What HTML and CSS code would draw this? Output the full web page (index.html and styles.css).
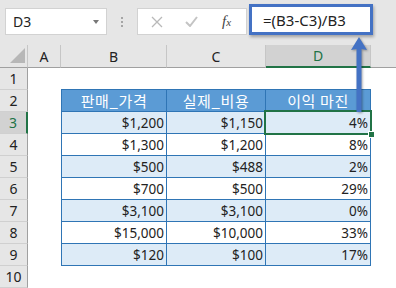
FILE: index.html
```html
<!doctype html>
<html>
<head>
<meta charset="UTF-8">
<title>Sheet</title>
<link rel="stylesheet" href="styles.css">
</head>
<body>
<div class="app">
  <div class="bar">
    <div class="namebox"><span>D3</span><span class="caret"></span></div>
    <div class="grip"><i></i><i></i><i></i></div>
    <div class="fxbox">
      <svg class="ico-x" width="12" height="12" viewBox="0 0 12 12"><path d="M1 1L11 11M11 1L1 11" stroke="#b9b9b9" stroke-width="1.3" fill="none"/></svg>
      <svg class="ico-ok" width="13" height="11" viewBox="0 0 13 11"><path d="M1 6L5 10L12 1" stroke="#c4c4c4" stroke-width="2" fill="none"/></svg>
      <span class="fx">f<small>x</small></span>
    </div>
    <div class="formula">=(B3-C3)/B3</div>
  </div>

  <div class="sheet">
    <div class="colhead corner"><svg width="17" height="17" viewBox="0 0 17 17"><polygon points="16,1 16,16 1,16" fill="#b7b7b7"/></svg></div>
    <div class="colhead">A</div>
    <div class="colhead">B</div>
    <div class="colhead">C</div>
    <div class="colhead active">D</div>
    <div class="colhead last"></div>

    <div class="rowhead">1</div><div></div><div class="edge"></div><div class="edge"></div><div class="edge"></div><div></div>

    <div class="rowhead">2</div><div></div>
    <div class="th first">판매_가격</div><div class="th">실제_비용</div><div class="th">이익 마진</div><div></div>

    <div class="rowhead active">3</div><div></div>
    <div class="td band first">$1,200</div><div class="td band">$1,150</div><div class="td band sel">4%</div><div></div>

    <div class="rowhead">4</div><div></div>
    <div class="td first">$1,300</div><div class="td">$1,200</div><div class="td">8%</div><div></div>

    <div class="rowhead">5</div><div></div>
    <div class="td band first">$500</div><div class="td band">$488</div><div class="td band">2%</div><div></div>

    <div class="rowhead">6</div><div></div>
    <div class="td first">$700</div><div class="td">$500</div><div class="td">29%</div><div></div>

    <div class="rowhead">7</div><div></div>
    <div class="td band first">$3,100</div><div class="td band">$3,100</div><div class="td band">0%</div><div></div>

    <div class="rowhead">8</div><div></div>
    <div class="td first">$15,000</div><div class="td">$10,000</div><div class="td">33%</div><div></div>

    <div class="rowhead">9</div><div></div>
    <div class="td band first">$120</div><div class="td band">$100</div><div class="td band">17%</div><div></div>

    <div class="rowhead">10</div><div></div><div></div><div></div><div></div><div></div>
  </div>

  <!-- callout arrow from the formula bar down to D3 -->
  <svg class="arrow" width="22" height="80" viewBox="0 0 22 80">
    <polygon points="11,3 19,16 13.5,15 13.5,78 8.5,78 8.5,15 3,16" fill="#4472c4"/>
  </svg>
</div>
</body>
</html>
```

FILE: styles.css
```css
html, body {
  margin: 0;
  height: 100%;
}

body {
  font-family: "Noto Sans", "Noto Sans CJK KR", sans-serif;
  color: #222;
  background: #fff;
}

.app {
  position: relative;
  width: 396px;
  height: 288px;
  overflow: hidden;
}

/* formula bar */
.bar {
  display: flex;
  align-items: flex-start;
  height: 45px;
  background: #e6e6e6;
}

.namebox {
  display: flex;
  align-items: center;
  justify-content: space-between;
  box-sizing: border-box;
  width: 102px;
  height: 27px;
  margin: 8px 0 0 5px;
  padding: 0 7px 0 7px;
  background: #fff;
  border: 1px solid #d2d2d2;
  font-size: 14px;
}

.caret {
  width: 0;
  height: 0;
  border-left: 3.5px solid transparent;
  border-right: 3.5px solid transparent;
  border-top: 4px solid #777;
}

.grip {
  display: flex;
  flex-direction: column;
  align-items: center;
  gap: 2px;
  width: 30px;
  margin-top: 17px;
}

.grip i {
  width: 2px;
  height: 2px;
  background: #a5a5a5;
}

.fxbox {
  display: flex;
  align-items: center;
  box-sizing: border-box;
  width: 110px;
  height: 27px;
  margin-top: 8px;
  background: #fff;
  border: 1px solid #d2d2d2;
}

.ico-x { margin-left: 13px; }
.ico-ok { margin-left: 22px; }

.fx {
  margin-left: 24px;
  font-family: "Liberation Serif", serif;
  font-style: italic;
  font-size: 15px;
  color: #444;
}

.fx small {
  font-size: 11px;
}

.formula {
  box-sizing: border-box;
  width: 124px;
  height: 31px;
  margin: 4px 0 0 2px;
  padding: 2px 0 0 11px;
  background: #fff;
  border: 3px solid #4472c4;
  box-shadow: 1px 2px 3px rgba(0, 0, 0, .3);
  font-size: 15px;
  line-height: 22px;
}

/* grid */
.sheet {
  display: grid;
  grid-template-columns: 28px 33px 106px 99px 105px 1fr;
  grid-template-rows: 23px;
  grid-auto-rows: 22px;
  font-size: 13.5px;
}

.sheet > div {
  box-sizing: border-box;
}

.colhead {
  display: flex;
  align-items: center;
  justify-content: center;
  background: #e6e6e6;
  border-right: 1px solid #c6c6c6;
  border-bottom: 1px solid #a0a0a0;
  font-size: 14px;
}

.colhead.last { border-right: none; }

.colhead.corner {
  align-items: flex-end;
  justify-content: flex-end;
  padding: 0 1px 3px 0;
}

.colhead.corner svg { display: block; }

.colhead.active {
  background: #d2d2d2;
  color: #217346;
  border-bottom: 2px solid #217346;
}

.rowhead {
  display: flex;
  align-items: center;
  justify-content: center;
  background: #e6e6e6;
  border-right: 1px solid #a0a0a0;
  border-bottom: 1px solid #d0d0d0;
  font-size: 14px;
}

.rowhead.active {
  background: #d2d2d2;
  color: #217346;
  border-right: 2px solid #217346;
}

.edge {
  border-bottom: 1px solid #2f75b5;
}

.th, .td {
  display: flex;
  align-items: center;
  border-right: 1px solid #2f75b5;
  border-bottom: 1px solid #2f75b5;
}

.first {
  border-left: 1px solid #2f75b5;
}

.th {
  justify-content: center;
  background: #5b9bd5;
  color: #fff;
  font-family: "Noto Sans CJK KR", sans-serif;
  font-size: 15px;
  letter-spacing: 0.6px;
}

.td {
  justify-content: flex-end;
  padding-right: 2px;
}

.band {
  background: #ddebf7;
}

/* active cell */
.sel {
  position: relative;
  z-index: 1;
}

.sel::after {
  content: "";
  position: absolute;
  top: -2px;
  left: -2px;
  right: -2px;
  bottom: -2px;
  border: 2px solid #217346;
}

.sel::before {
  content: "";
  position: absolute;
  right: -5px;
  bottom: -5px;
  width: 5px;
  height: 5px;
  background: #217346;
  border: 1px solid #fff;
  z-index: 2;
}

.arrow {
  position: absolute;
  left: 348px;
  top: 34px;
  filter: drop-shadow(1px 1px 1px rgba(0, 0, 0, .35));
  z-index: 3;
}
```
